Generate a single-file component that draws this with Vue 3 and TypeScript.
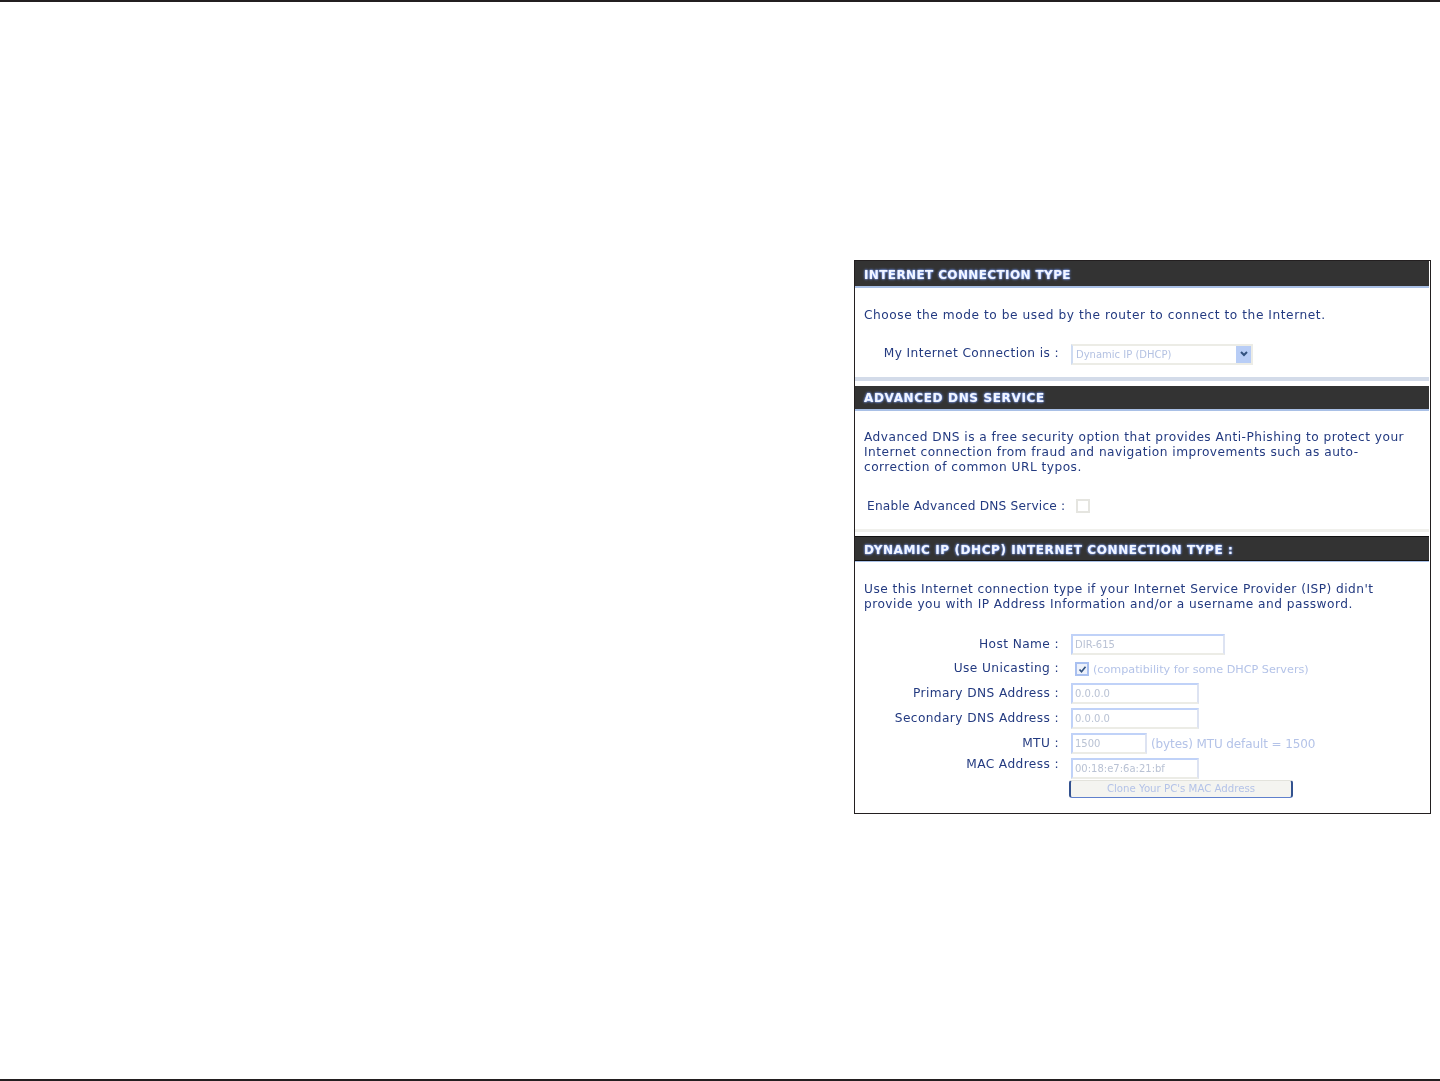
<script setup lang="ts">
interface Row { label: string; kind: string; value?: string; width?: number; note?: string; height: number; raised?: boolean }
const rows: Row[] = [
  { label: 'Host Name :', kind: 'input', value: 'DIR-615', width: 154, height: 25 },
  { label: 'Use Unicasting :', kind: 'check', note: '(compatibility for some DHCP Servers)', height: 24 },
  { label: 'Primary DNS Address :', kind: 'input', value: '0.0.0.0', width: 128, height: 25 },
  { label: 'Secondary DNS Address :', kind: 'input', value: '0.0.0.0', width: 128, height: 25 },
  { label: 'MTU :', kind: 'input', value: '1500', width: 76, note: '(bytes) MTU default = 1500', height: 25 },
  { label: 'MAC Address :', kind: 'input', value: '00:18:e7:6a:21:bf', width: 128, height: 24, raised: true },
]
</script>

<template>
  <div class="page">
    <div class="panel">
      <h2 class="bar first">INTERNET CONNECTION TYPE</h2>
      <div class="rule"></div>
      <section class="sec s1">
        <p class="para">Choose the mode to be used by the router to connect to the Internet.</p>
        <div class="row conn">
          <span class="label">My Internet Connection is :</span>
          <div class="select"><span>Dynamic IP (DHCP)</span><i class="arrow"><svg width="14" height="14" viewBox="0 0 14 14"><path d="M4 5l3 3 3-3" fill="none" stroke="#33527f" stroke-width="2"/></svg></i></div>
        </div>
      </section>
      <div class="sep blue"></div>
      <h2 class="bar second">ADVANCED DNS SERVICE</h2>
      <div class="rule"></div>
      <section class="sec s2">
        <p class="para">Advanced DNS is a free security option that provides Anti-Phishing to protect your<br>Internet connection from fraud and navigation improvements such as auto-<br>correction of common URL typos.</p>
        <div class="row dns">
          <span class="label dnsl">Enable Advanced DNS Service :</span>
          <span class="box off"></span>
        </div>
      </section>
      <div class="sep"></div>
      <h2 class="bar third">DYNAMIC IP (DHCP) INTERNET CONNECTION TYPE :</h2>
      <div class="rule"></div>
      <section class="sec s3">
        <p class="para">Use this Internet connection type if your Internet Service Provider (ISP) didn't<br>provide you with IP Address Information and/or a username and password.</p>
        <div class="form">
          <div v-for="r in rows" :key="r.label" class="row" :style="{ height: r.height + 'px' }">
            <span class="label" :class="{ raised: r.raised }">{{ r.label }}</span>
            <template v-if="r.kind === 'input'">
              <span class="input" :style="{ width: r.width + 'px' }">{{ r.value }}</span>
            </template>
            <span v-else class="box on"><svg width="9" height="9" viewBox="0 0 9 9"><path d="M1.5 4.5l2 2.2 4-5" fill="none" stroke="#33527f" stroke-width="1.7"/></svg></span>
            <span v-if="r.note" class="note" :class="{ tight: r.kind === 'check' }">{{ r.note }}</span>
          </div>
          <div class="btnrow"><span class="btn">Clone Your PC's MAC Address</span></div>
        </div>
      </section>
    </div>
  </div>
</template>

<style scoped>
.page {
  box-sizing: border-box;
  height: 1081px;
  border-top: 2px solid #231f20;
  border-bottom: 2px solid #231f20;
  padding: 258px 9px 0 854px;
  background: #fff;
  font-family: "DejaVu Sans", sans-serif;
  overflow: hidden;
}
.panel {
  box-sizing: border-box;
  width: 577px;
  height: 554px;
  border: 1px solid #231f20;
  padding: 0 1px 0 0;
  overflow: hidden;
}
.bar {
  margin: 0;
  height: 25px;
  line-height: 29px;
  background: #333;
  color: #f2f6ff;
  font-size: 12px;
  font-weight: 700;
  padding-left: 9px;
  letter-spacing: 0.38px;
  text-shadow: 0 0 1px #7f9ff0, 0 0 2px #7f9ff0, 0 0 3px #6f8fe4;
  filter: blur(0.5px);
  white-space: nowrap;
}
.rule { height: 2px; background: #a9c0e6; }
.sec { color: #1e2f74; }
.para {
  margin: 0;
  font-size: 12.2px;
  letter-spacing: 0.47px;
  line-height: 15px;
  padding-left: 9px;
  color: #233a80;
  filter: blur(0.7px);
  white-space: nowrap;
}
.s1 .para { letter-spacing: 0.55px; }
.row { display: flex; align-items: center; }
.label {
  box-sizing: border-box;
  width: 204px;
  padding-bottom: 2px;
  text-align: right;
  font-size: 12.2px;
  letter-spacing: 0.4px;
  color: #233a80;
  filter: blur(0.7px);
  white-space: nowrap;
  flex: none;
}
.label.raised { padding-bottom: 9px; }
.s1 { height: 89px; padding-top: 20px; box-sizing: border-box; }
.conn { margin-top: 19px; height: 24px; }
.select {
  margin-left: 12px;
  box-sizing: border-box;
  width: 182px;
  height: 21px;
  border: 2px solid #ecece6;
  border-left-color: #cfdcf2;
  display: flex;
  align-items: center;
  justify-content: space-between;
  font-size: 10px;
  color: #b4c2e2;
  padding-left: 3px;
  filter: blur(0.7px);
}
.arrow { display: flex; width: 15px; height: 17px; background: #b8cdf6; align-items: center; justify-content: center; }
.sep { height: 3px; background: #f0f0ec; margin-top: 0; }
.sep.blue { height: 4px; background: #d3dbe9; border-bottom: 2px solid #fff; box-shadow: 0 2px 0 #fff; }
.second { margin-top: 3px; height: 23px; line-height: 24px; letter-spacing: 0.65px; }
.s2 { height: 118px; padding-top: 19px; box-sizing: border-box; }
.dns { margin-top: 19px; height: 24px; }
.dnsl { width: auto; margin-left: 12px; padding-bottom: 0; letter-spacing: 0.2px; }
.box {
  box-sizing: border-box;
  width: 14px;
  height: 14px;
  display: inline-flex;
  align-items: center;
  justify-content: center;
  filter: blur(0.5px);
  flex: none;
}
.box.off { border: 2px solid #e5e5e0; margin-left: 11px; }
.box.on { border: 2px solid #a9c0f0; margin: 0 0 0 16px; background: #eef2fb; }
.third { margin-top: 5px; height: 23px; line-height: 26px; letter-spacing: 0.59px; box-shadow: 0 -1px 0 #111, 0 1px 0 #111; }
.s3 { padding-top: 20px; box-sizing: border-box; }
.form { margin-top: 20px; }
.input {
  box-sizing: border-box;
  margin-left: 12px;
  height: 21px;
  line-height: 17px;
  border: 2px solid #c0d2f8;
  border-right-color: #dde3f2;
  border-bottom-color: #ecece6;
  font-size: 10px;
  color: #b9c2d4;
  padding-left: 2px;
  filter: blur(0.7px);
  flex: none;
  white-space: nowrap;
}
.note {
  font-size: 12px;
  color: #b4c3e8;
  margin-left: 4px;
  letter-spacing: -0.1px;
  filter: blur(0.7px);
  white-space: nowrap;
}
.note.tight { font-size: 11.2px; letter-spacing: 0; }
.btnrow { padding-left: 214px; }
.btn {
  box-sizing: border-box;
  display: block;
  width: 224px;
  height: 18px;
  line-height: 16px;
  text-align: center;
  font-size: 10.2px;
  color: #b4c3e8;
  border: 1px solid #5f80cc;
  border-left: 2px solid #33528f;
  border-right: 2px solid #33528f;
  border-top-color: #e3e3dc;
  border-radius: 3px;
  background: #f4f4f0;
  filter: blur(0.5px);
}
</style>
